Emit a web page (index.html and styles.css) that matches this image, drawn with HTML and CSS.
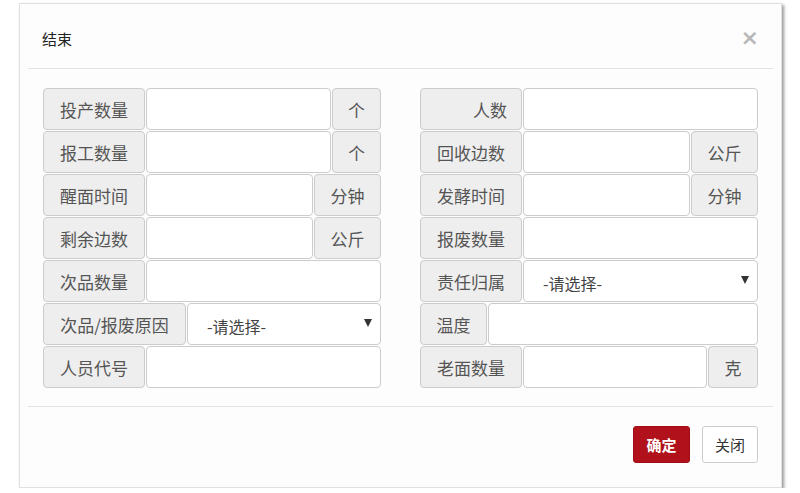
FILE: index.html
```html
<!DOCTYPE html>
<html lang="zh">
<head>
<meta charset="utf-8">
<title>结束</title>
<link rel="stylesheet" href="styles.css">
</head>
<body>
<div class="modal">
  <div class="modal-header">
    <span class="modal-title">结束</span>
    <span class="close">×</span>
  </div>
  <div class="modal-body">
    <div class="col">
      <div class="group"><span class="label w102">投产数量</span><span class="input"></span><span class="addon w49">个</span></div>
      <div class="group"><span class="label w102">报工数量</span><span class="input"></span><span class="addon w49">个</span></div>
      <div class="group"><span class="label w102">醒面时间</span><span class="input"></span><span class="addon w67">分钟</span></div>
      <div class="group"><span class="label w102">剩余边数</span><span class="input"></span><span class="addon w67">公斤</span></div>
      <div class="group"><span class="label w102">次品数量</span><span class="input"></span></div>
      <div class="group"><span class="label w143">次品/报废原因</span><span class="input select"><span class="sel-text">-请选择-</span><span class="caret"></span></span></div>
      <div class="group"><span class="label w102">人员代号</span><span class="input"></span></div>
    </div>
    <div class="col">
      <div class="group"><span class="label w102 right">人数</span><span class="input"></span></div>
      <div class="group"><span class="label w102">回收边数</span><span class="input"></span><span class="addon w67">公斤</span></div>
      <div class="group"><span class="label w102">发酵时间</span><span class="input"></span><span class="addon w67">分钟</span></div>
      <div class="group"><span class="label w102">报废数量</span><span class="input"></span></div>
      <div class="group"><span class="label w102">责任归属</span><span class="input select"><span class="sel-text">-请选择-</span><span class="caret"></span></span></div>
      <div class="group"><span class="label w67">温度</span><span class="input"></span></div>
      <div class="group"><span class="label w102">老面数量</span><span class="input"></span><span class="addon w50">克</span></div>
    </div>
  </div>
  <div class="modal-footer">
    <button class="btn btn-primary">确定</button>
    <button class="btn btn-default">关闭</button>
  </div>
</div>
</body>
</html>
```

FILE: styles.css
```css
html, body {
  margin: 0;
  padding: 0;
  background: #ffffff;
}
body {
  font-family: "Liberation Sans", "Noto Sans CJK SC", sans-serif;
  color: #333;
  padding: 3px 0 0 19px;
}
.modal {
  width: 763px;
  height: 485px;
  box-sizing: border-box;
  background: #fdfdfd;
  border: 1px solid #e0e0e0;
  box-shadow: 2px 2px 3px rgba(0, 0, 0, 0.4);
  padding: 0 8px;
  display: flex;
  flex-direction: column;
}
.modal-header {
  height: 65px;
  border-bottom: 1px solid #e3e3e3;
  display: flex;
  align-items: center;
  justify-content: space-between;
  padding: 0 14px 0 14px;
  box-sizing: border-box;
}
.modal-title {
  font-family: "Noto Sans CJK SC", sans-serif;
  font-size: 15px;
  color: #222;
  margin-top: 4px;
}
.close {
  font-family: "DejaVu Sans", sans-serif;
  font-size: 22px;
  font-weight: bold;
  color: #b8b8b8;
  line-height: 1;
  margin-top: 4px;
}
.modal-body {
  display: flex;
  gap: 39px;
  padding: 19px 15px 18px 15px;
  border-bottom: 1px solid #e3e3e3;
}
.col {
  width: 338px;
  display: flex;
  flex-direction: column;
  gap: 1px;
}
.group {
  display: flex;
  gap: 1px;
  height: 42px;
}
.label, .addon {
  box-sizing: border-box;
  background: #eeeeee;
  border: 1px solid #cccccc;
  border-radius: 4px;
  display: flex;
  align-items: center;
  justify-content: center;
  font-family: "Noto Sans CJK SC", sans-serif;
  font-size: 17px;
  color: #555;
  flex: none;
}
.label.right {
  justify-content: flex-end;
  padding-right: 14px;
}
.w102 { width: 102px; }
.w143 { width: 143px; }
.w67 { width: 67px; }
.w49 { width: 49px; }
.w50 { width: 50px; }
.input {
  flex: 1;
  box-sizing: border-box;
  background: #ffffff;
  border: 1px solid #cccccc;
  border-radius: 4px;
}
.select {
  display: flex;
  align-items: center;
  justify-content: space-between;
  padding: 3px 8px 0 19px;
}
.sel-text {
  font-family: "Noto Sans CJK SC", sans-serif;
  font-size: 16px;
  color: #444;
}
.caret {
  width: 0;
  height: 0;
  border-left: 4px solid transparent;
  border-right: 4px solid transparent;
  border-top: 8px solid #333;
  margin-top: -6px;
}
.modal-footer {
  display: flex;
  justify-content: flex-end;
  gap: 12px;
  padding: 19px 15px 0 0;
}
.btn {
  height: 37px;
  box-sizing: border-box;
  border-radius: 3px;
  font-family: "Noto Sans CJK SC", sans-serif;
  font-size: 15px;
  padding: 0;
  cursor: pointer;
}
.btn-primary {
  width: 57px;
  background: #b0111a;
  border: 1px solid #a00d15;
  color: #fff;
  font-weight: bold;
}
.btn-default {
  width: 56px;
  background: #fff;
  border: 1px solid #cccccc;
  color: #333;
}
```
